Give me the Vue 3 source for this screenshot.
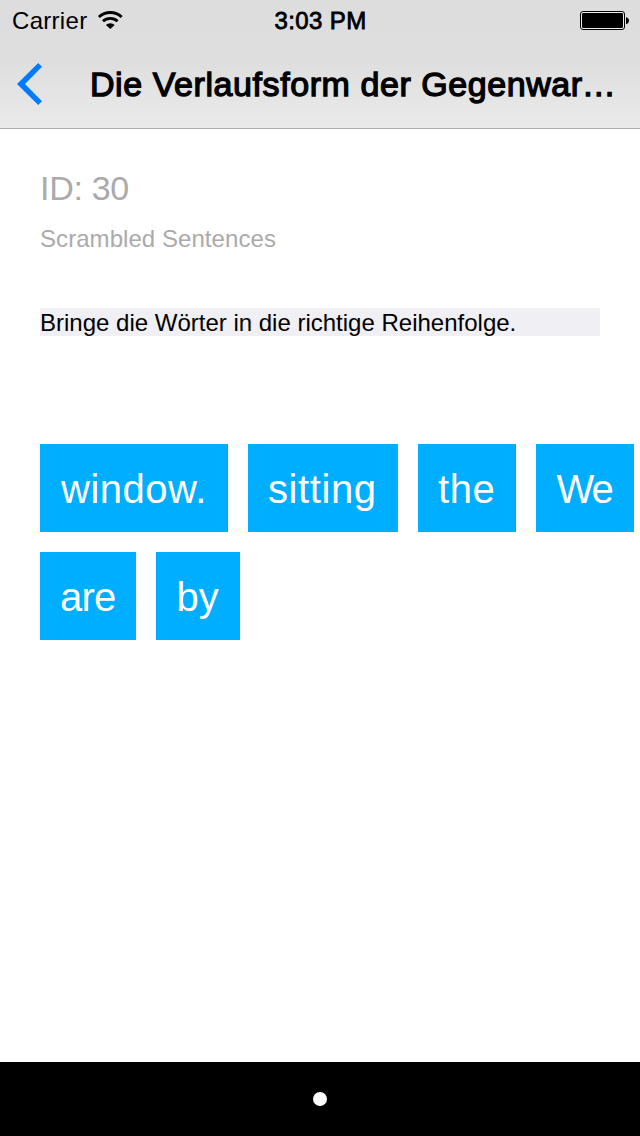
<script setup>
const rows = [
  [
    { text: 'window.', width: 188, spacing: 0.5, inset: 21 },
    { text: 'sitting', width: 150, spacing: 0.6, inset: 20 },
    { text: 'the', width: 98, spacing: 0.6, inset: 20 },
    { text: 'We', width: 98, spacing: -2, inset: 20.5 },
  ],
  [
    { text: 'are', width: 96, spacing: -0.8, inset: 20 },
    { text: 'by', width: 84, spacing: 0, inset: 20.5 },
  ],
]
</script>

<template>
  <div class="screen">
    <header class="header">
      <div class="status">
        <div class="carrier">
          <span class="carrier-name">Carrier</span>
          <svg class="wifi" width="26" height="18" viewBox="0 0 26 18">
            <path d="M1.9 6a16.6 16.6 0 0 1 22.8 0" fill="none" stroke="#000" stroke-width="2.9" />
            <path d="M6 10.3a10.6 10.6 0 0 1 14.6 0" fill="none" stroke="#000" stroke-width="2.9" />
            <path d="M8.9 14a6.2 6.2 0 0 1 8.8 0L13.3 18z" fill="#000" />
          </svg>
        </div>
        <span class="time">3:03 PM</span>
        <svg class="battery" width="50" height="20" viewBox="0 0 50 20">
          <rect x="0.5" y="0.5" width="44" height="18" rx="2.5" fill="#eee" stroke="#000" />
          <rect x="2" y="2" width="41" height="15" rx="1.3" fill="#000" />
          <path d="M46 6.2c4 .4 4 6.4 0 6.8z" fill="#000" />
        </svg>
      </div>
      <div class="nav">
        <svg class="back" width="26" height="42" viewBox="0 0 26 42">
          <path d="M21.2 0L0 21l21.2 21l3.8-3.8L8 21L25 3.8z" fill="#007aff" />
        </svg>
        <h1 class="title">Die Verlaufsform der Gegenwar<span class="ellipsis">…</span></h1>
      </div>
    </header>
    <main class="content">
      <div class="id">ID: 30</div>
      <div class="kind">Scrambled Sentences</div>
      <p class="task">Bringe die Wörter in die richtige Reihenfolge.</p>
      <div class="words">
        <div v-for="(row, i) in rows" :key="i" class="row">
          <button
            v-for="word in row"
            :key="word.text"
            class="word"
            :style="{ width: word.width + 'px', paddingLeft: word.inset + 'px', letterSpacing: word.spacing + 'px' }"
          >{{ word.text }}</button>
        </div>
      </div>
    </main>
    <footer class="pager"><span class="dot"></span></footer>
  </div>
</template>

<style scoped>
.screen {
  width: 640px;
  height: 1136px;
  display: flex;
  flex-direction: column;
  overflow: hidden;
  background: #fff;
  color: #000;
  font-family: "Liberation Sans", Arial, sans-serif;
}
.header {
  box-sizing: border-box;
  height: 129px;
  flex: none;
  background: linear-gradient(#dddddd 0, #dedede 60px, #eaeaea 128px);
  border-bottom: 1px solid #adadad;
}
.status {
  height: 40px;
  display: grid;
  grid-template-columns: 1fr auto 1fr;
  align-items: center;
  padding: 0 10px 0 12px;
  font-size: 24px;
  line-height: 28px;
}
.carrier {
  display: flex;
  align-items: center;
}
.carrier-name {
  width: 85px;
  padding-top: 2px;
  letter-spacing: 0.3px;
}
.time {
  margin-left: -1px;
  padding-top: 2px;
  letter-spacing: 0.4px;
  -webkit-text-stroke: 0.8px #000;
}
.battery {
  justify-self: end;
  margin-top: 2px;
}
.nav {
  height: 88px;
  display: flex;
  align-items: center;
  padding-left: 17px;
}
.back {
  flex: none;
}
.title {
  margin: 0 0 0 47px;
  font-size: 34px;
  line-height: 40px;
  font-weight: 400;
  letter-spacing: 0.57px;
  white-space: nowrap;
  -webkit-text-stroke: 1.3px #000;
}
.ellipsis {
  margin-left: -1px;
}
.content {
  flex: 1;
  padding: 39px 0 0 40px;
}
.id {
  height: 40px;
  font-size: 34px;
  line-height: 40px;
  letter-spacing: -0.3px;
  color: #aaa;
}
.kind {
  margin-top: 17px;
  height: 28px;
  font-size: 24px;
  line-height: 28px;
  letter-spacing: 0.06px;
  color: #aaa;
}
.task {
  width: 560px;
  height: 28px;
  margin: 55px 0 0;
  background: #efeff4;
  font-size: 24px;
  line-height: 30px;
  white-space: nowrap;
}
.words {
  margin-top: 108px;
  display: flex;
  flex-direction: column;
  gap: 20px;
}
.row {
  display: flex;
  gap: 20px;
}
.word {
  flex: none;
  height: 88px;
  padding: 3px 0 0;
  border: 0;
  background: #00aeff;
  color: #fff;
  font-family: inherit;
  font-size: 40px;
  text-align: left;
}
.pager {
  height: 74px;
  flex: none;
  display: flex;
  align-items: center;
  justify-content: center;
  background: #000;
}
.dot {
  width: 14px;
  height: 14px;
  border-radius: 50%;
  background: #fff;
}
</style>
